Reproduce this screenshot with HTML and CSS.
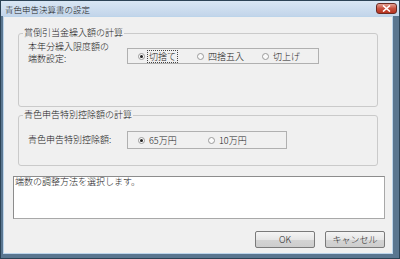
FILE: index.html
```html
<!DOCTYPE html>
<html lang="ja">
<head>
  <meta charset="utf-8">
  <title>青色申告決算書の設定</title>
  <link rel="stylesheet" href="styles.css">
</head>
<body>
  <div class="window">
    <div class="titlebar">
      <span class="title">青色申告決算書の設定</span>
      <span class="close">
        <svg width="9" height="7" viewBox="0 0 9 7">
          <path d="M1 0.5 L8 6.5 M8 0.5 L1 6.5" stroke="#fff" stroke-width="1.6" fill="none"/>
        </svg>
      </span>
    </div>
    <div class="client">
      <fieldset class="group group-bad">
        <legend>賞倒引当金繰入額の計算</legend>
        <div class="row">
          <div class="label label-two">本年分繰入限度額の<br>端数設定:</div>
          <div class="radios radios-bad">
            <span class="radio checked w59"><i></i><span class="focus">切捨て</span></span>
            <span class="radio w65"><i></i><span class="text">四捨五入</span></span>
            <span class="radio"><i></i><span class="text">切上げ</span></span>
          </div>
        </div>
      </fieldset>
      <fieldset class="group group-blue">
        <legend>青色申告特別控除額の計算</legend>
        <div class="row">
          <div class="label label-one">青色申告特別控除額:</div>
          <div class="radios radios-blue">
            <span class="radio checked w70"><i></i><span class="text">65万円</span></span>
            <span class="radio"><i></i><span class="text">10万円</span></span>
          </div>
        </div>
      </fieldset>
      <div class="help">端数の調整方法を選択します。</div>
      <div class="buttons">
        <button>OK</button>
        <button>キャンセル</button>
      </div>
    </div>
  </div>
</body>
</html>
```

FILE: styles.css
```css
* {
  box-sizing: border-box;
}
body {
  margin: 0;
  font-family: "Noto Sans CJK JP", sans-serif;
  font-size: 9px;
  font-weight: 300;
  color: #1a1a1a;
  background: #ffffff;
}
.window {
  width: 400px;
  height: 259px;
  display: flex;
  flex-direction: column;
  background: #5a7690;
  border: 1px solid #2c4356;
}
.titlebar {
  height: 15px;
  display: flex;
  align-items: center;
  padding-left: 4px;
  background: linear-gradient(#d9e6f4, #c2d5ea);
}
.title {
  font-size: 8.5px;
  line-height: 10px;
  color: #1c1c1c;
}
.close {
  margin-left: auto;
  margin-right: 2px;
  width: 21px;
  height: 11px;
  display: flex;
  align-items: center;
  justify-content: center;
  border: 1px solid #6b2a22;
  border-radius: 3px;
  background: linear-gradient(#e4a093, #c8513f 50%, #b7321f);
}
.client {
  flex: 1;
  margin: 0 6px 4px 2px;
  border: 1px solid #bcd4ea;
  background: #f0f0f0;
  display: flex;
  flex-direction: column;
}
.group {
  margin: 0 14px;
  padding: 0 4px;
  border: 1px solid #cacaca;
  border-radius: 3px;
  min-width: 0;
}
.group legend {
  padding: 0 1px;
  line-height: 10px;
  color: #1a1a1a;
}
.group-bad {
  margin-top: 11px;
  padding-top: 3px;
  padding-bottom: 41px;
}
.group-blue {
  margin-top: 3px;
  padding-top: 11px;
  padding-bottom: 16px;
}
.row {
  display: flex;
  padding-left: 5px;
}
.label {
  width: 99px;
}
.label-two {
  line-height: 12px;
}
.label-one {
  line-height: 18px;
}
.radios {
  display: flex;
  align-items: center;
  padding-left: 10px;
  border: 1px solid #b0b0b0;
  background: #f0f0f0;
}
.radios-bad {
  width: 192px;
  height: 16px;
  margin-top: 7px;
}
.radios-blue {
  width: 160px;
  height: 18px;
}
.radio {
  display: flex;
  align-items: center;
}
.radio i {
  width: 7px;
  height: 7px;
  margin-right: 3px;
  border: 1px solid #9a9a9a;
  border-radius: 50%;
  background: #fafafa;
  display: flex;
  align-items: center;
  justify-content: center;
}
.radio.checked i::after {
  content: "";
  width: 3px;
  height: 3px;
  border-radius: 50%;
  background: #222222;
}
.w59 {
  width: 59px;
}
.w65 {
  width: 65px;
}
.w70 {
  width: 70px;
}
.text {
  line-height: 11px;
  padding: 0 1px;
}
.focus {
  line-height: 11px;
  padding: 0 1px;
  outline: 1px dotted #444444;
}
.help {
  margin: 10px 7px 0 9px;
  height: 43px;
  padding: 0 1px;
  line-height: 10px;
  background: #ffffff;
  border: 1px solid #a8a8a8;
  border-top-color: #8c8c8c;
  border-left-color: #8c8c8c;
}
.buttons {
  margin: 12px 7px 0 0;
  display: flex;
  justify-content: flex-end;
  gap: 10px;
}
.buttons button {
  width: 60px;
  height: 17px;
  padding: 0;
  font-family: inherit;
  font-size: 9px;
  font-weight: 300;
  color: #1a1a1a;
  border: 1px solid #7a7a7a;
  border-radius: 2px;
  background: linear-gradient(#f4f4f4, #e6e6e6 50%, #d4d4d4 51%, #cdcdcd);
}
```
